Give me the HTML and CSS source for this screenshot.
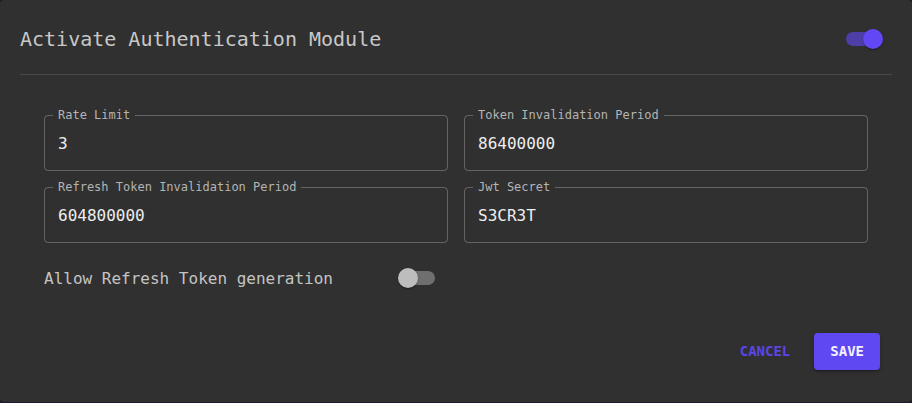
FILE: index.html
```html
<!DOCTYPE html>
<html lang="en">
<head>
<meta charset="utf-8">
<title>Activate Authentication Module</title>
<link rel="stylesheet" href="styles.css">
</head>
<body>
<div class="dialog">
  <div class="header">
    <h2 class="title">Activate Authentication Module</h2>
    <span class="switch switch-on"><span class="track"></span><span class="thumb"></span></span>
  </div>
  <div class="content">
    <div class="grid">
      <div class="field">
        <label class="field-label">Rate Limit</label>
        <input class="field-input" type="text" value="3">
      </div>
      <div class="field">
        <label class="field-label">Token Invalidation Period</label>
        <input class="field-input" type="text" value="86400000">
      </div>
      <div class="field">
        <label class="field-label">Refresh Token Invalidation Period</label>
        <input class="field-input" type="text" value="604800000">
      </div>
      <div class="field">
        <label class="field-label">Jwt Secret</label>
        <input class="field-input" type="text" value="S3CR3T">
      </div>
    </div>
    <div class="toggle-row">
      <span class="toggle-label">Allow Refresh Token generation</span>
      <span class="switch switch-off"><span class="track"></span><span class="thumb"></span></span>
    </div>
  </div>
  <div class="actions">
    <button class="btn btn-text">CANCEL</button>
    <button class="btn btn-contained">SAVE</button>
  </div>
</div>
</body>
</html>
```
FILE: styles.css
```css
* { box-sizing: border-box; }
html, body { margin: 0; padding: 0; }
body {
  background: #1b1930;
  width: 912px;
  height: 403px;
  overflow: hidden;
  font-family: "DejaVu Sans Mono", "Liberation Mono", monospace;
}
.dialog {
  width: 912px;
  height: 402px;
  background: #303030;
  border-radius: 4px;
}
.header {
  margin: 0 20px;
  padding: 20px 0 16px;
  border-bottom: 1px solid rgba(255,255,255,0.12);
  display: flex;
  align-items: center;
  justify-content: space-between;
}
.title {
  margin: 0;
  font-size: 20px;
  font-weight: normal;
  color: #c8c8c8;
  line-height: 38px;
}
.switch {
  position: relative;
  display: inline-block;
  width: 58px;
  height: 38px;
  flex: none;
}
.switch .track {
  position: absolute;
  left: 12px;
  top: 12px;
  width: 34px;
  height: 14px;
  border-radius: 7px;
}
.switch .thumb {
  position: absolute;
  top: 9px;
  width: 20px;
  height: 20px;
  border-radius: 50%;
  box-shadow: 0 2px 1px -1px rgba(0,0,0,0.2), 0 1px 1px 0 rgba(0,0,0,0.14), 0 1px 3px 0 rgba(0,0,0,0.12);
}
.switch-on .track { background: #4e3fa8; }
.switch-on .thumb { left: 29px; background: #6148f4; }
.switch-off .track { background: #6f6f6f; }
.switch-off .thumb { left: 9px; background: #bdbdbd; }
.content {
  padding: 40px 44px 0;
}
.grid {
  display: grid;
  grid-template-columns: 1fr 1fr;
  gap: 16px;
}
.field {
  position: relative;
  height: 56px;
  border: 1px solid rgba(255,255,255,0.25);
  border-radius: 4px;
}
.field-label {
  position: absolute;
  left: 8px;
  top: -8px;
  padding: 0 5px;
  background: #303030;
  font-size: 12px;
  line-height: 14px;
  color: #b4b4b4;
}
.field-input {
  display: block;
  width: 100%;
  height: 54px;
  border: 0;
  outline: 0;
  background: transparent;
  padding: 0 13px;
  font-family: inherit;
  font-size: 16px;
  color: #eeeeee;
}
.toggle-row {
  margin-top: 16px;
  display: flex;
  align-items: center;
  height: 38px;
}
.toggle-label {
  width: 345px;
  font-size: 16px;
  color: #c4c4c4;
}
.actions {
  margin-top: 36px;
  padding-right: 32px;
  display: flex;
  justify-content: flex-end;
  gap: 16px;
}
.btn {
  font-family: inherit;
  font-size: 14px;
  font-weight: bold;
  line-height: 24.5px;
  border: 0;
  border-radius: 4px;
  cursor: pointer;
}
.btn-text {
  background: transparent;
  color: #5b45e6;
  padding: 6px 8px;
}
.btn-contained {
  background: #5f47f2;
  color: #f4f2ff;
  padding: 6px 16px;
  box-shadow: 0 3px 1px -2px rgba(0,0,0,0.2), 0 2px 2px 0 rgba(0,0,0,0.14), 0 1px 5px 0 rgba(0,0,0,0.12);
}
```
